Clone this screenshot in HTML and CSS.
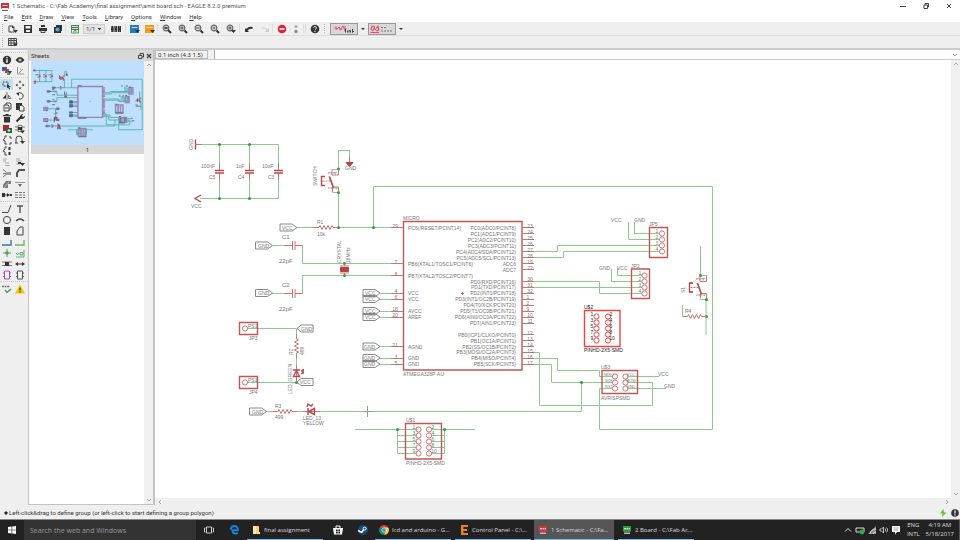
FILE: index.html
```
<!DOCTYPE html>
<html lang="en">
<head>
<meta charset="utf-8">
<title>1 Schematic - EAGLE</title>
<link rel="stylesheet" href="styles.css">
</head>
<body>
<header class="titlebar">
  <svg class="app-icon" viewBox="0 0 8 9"><path fill="#c8323c" d="M0 1h8v5l-1 1H1L0 6z"/><path fill="#eee" d="M1 6h6v2H1z"/><path stroke="#fff" stroke-width=".8" d="M1.500 3.500h5"/><path stroke="#666" d="M1 8.500h6"/></svg>
  <h1 class="title">1 Schematic - C:\Fab Academy\final assignment\amit board.sch - EAGLE 8.2.0 premium</h1>
  <div class="window-buttons">
    <button aria-label="Minimize"><svg viewBox="0 0 8 8"><path class="ln" d="M1 4.500h6"/></svg></button>
    <button aria-label="Restore"><svg viewBox="0 0 8 8"><path class="ln" d="M2 3h3.500v3.500H2zM3 3V1.500h3.500V5H5.500"/></svg></button>
    <button aria-label="Close"><svg viewBox="0 0 8 8"><path class="ln" d="M2 2l4 4M6 2L2 6"/></svg></button>
  </div>
</header>
<nav class="menubar">
  <a href="#"><u>F</u>ile</a><a href="#"><u>E</u>dit</a><a href="#"><u>D</u>raw</a><a href="#"><u>V</u>iew</a><a href="#"><u>T</u>ools</a><a href="#"><u>L</u>ibrary</a><a href="#"><u>O</u>ptions</a><a href="#"><u>W</u>indow</a><a href="#"><u>H</u>elp</a>
</nav>
<div class="toolbar">
  <i class="handle"></i>
  <button aria-label="New"><svg viewBox="0 0 10 10"><path class="ln" d="M6 8H1V2h3l2 2v2"/><path class="fl" d="M4 1l3 3H4zM5 6h5L7.500 9z"/></svg></button>
  <button aria-label="Save"><svg viewBox="0 0 10 10"><path class="fl" fill-rule="evenodd" d="M1 1h8v8H1zM2.500 2v2.500h5V2zM3 6v2h4V6z"/></svg></button>
  <button aria-label="Print"><svg viewBox="0 0 10 10"><path class="fl" d="M3 1h4v2H3zM1 4h8v3H1z"/><path class="ln" fill="#fff" d="M3 6h4v2.500H3z"/></svg></button>
  <button aria-label="CAM processor"><svg viewBox="0 0 10 10"><path class="fl" d="M3 1h6v6H8v2H1V3h2z"/><circle cx="4.500" cy="5.500" r="2" fill="#49a9e0"/></svg></button>
  <i class="sep"></i>
  <button aria-label="Board"><svg viewBox="0 0 10 10"><path fill="#4f7d55" d="M1 1h8v5H1z"/><path stroke="#cde3ce" d="M2 2.500h6M2 4.500h6"/><path fill="none" stroke="#58a65c" d="M1.500 6v3h7V6M4 8.500V6.500h2v2"/></svg></button>
  <label class="sheet-select"><select aria-label="Sheet"><option>1/1</option></select></label>
  <button class="wide" aria-label="Library"><svg viewBox="0 0 10 10"><path class="fl" d="M0 2h10v6H0z"/><path stroke="#aaa" d="M3 2v6M6.500 2v6"/><path stroke="#ddd" stroke-dasharray="1 1" stroke-width=".6" d="M0 3h10M0 7h10"/></svg></button>
  <i class="sep"></i>
  <button aria-label="Run SCR"><svg viewBox="0 0 10 10"><path fill="#2779c4" d="M0 1h9v8H0z"/><path stroke="#cfe4f5" d="M1.500 3.500h6"/><path class="fl" d="M5 6h5L7.500 9z"/></svg></button>
  <button aria-label="Run ULP"><svg viewBox="0 0 10 10"><path fill="#f29a1f" d="M0 1h9v8H0z"/><path stroke="#ffe6be" d="M1.500 3.500h6"/><path class="fl" d="M5 6h5L7.500 9z"/></svg></button>
  <i class="sep"></i>
  <button class="zoom" aria-label="Zoom to fit"><svg viewBox="0 0 10 10"><circle class="lens" cx="4" cy="4" r="2.800"/><path class="hd" d="M6 6l3 3"/><path class="ln" stroke-width="2" d="M2.500 4h3"/></svg></button>
  <button class="zoom" aria-label="Zoom in"><svg viewBox="0 0 10 10"><circle class="lens" cx="4" cy="4" r="2.800"/><path class="hd" d="M6.500 6.500L9 9"/><path class="ln" d="M2.500 4h3M4 2.500v3"/></svg></button>
  <button class="zoom" aria-label="Zoom out"><svg viewBox="0 0 10 10"><circle class="lens" cx="4" cy="4" r="2.800"/><path class="hd" d="M6.500 6.500L9 9"/><path class="ln" d="M2.500 4h3"/></svg></button>
  <button class="zoom" aria-label="Redraw"><svg viewBox="0 0 10 10"><circle class="lens" cx="4" cy="4" r="2.800"/><circle fill="#777" cx="4" cy="4" r="1.200"/><path class="hd" d="M6.500 6.500L9 9"/></svg></button>
  <button class="zoom" aria-label="Zoom select"><svg viewBox="0 0 10 10"><circle class="lens" cx="4" cy="4" r="2.800"/><path class="ln" d="M2.500 4h3M4 2.500v3"/><path class="fl" d="M4.500 6H10L7.500 9z"/></svg></button>
  <i class="sep"></i>
  <button class="zoom" aria-label="Undo"><svg viewBox="0 0 10 10"><path class="hd" fill="none" d="M2.500 6.500C4 4 6 3.500 8.500 4"/><path class="fl" d="M1 4v4h4z"/></svg></button>
  <button aria-label="Redo" disabled><svg viewBox="0 0 10 10"><path stroke="#ccc" fill="none" d="M1.500 4C4 3.500 6 4 7.500 6.500"/><path fill="#ccc" d="M9 4v4H5z"/></svg></button>
  <i class="sep"></i>
  <button aria-label="Stop"><svg viewBox="0 0 10 10"><circle cx="5" cy="5" r="4.300" fill="#e0203e"/><path stroke="#fff" stroke-width="1.600" d="M2.500 5h5"/></svg></button>
  <button class="slim" aria-label="Go"><svg viewBox="0 0 10 10"><circle cx="5" cy="2.500" r="1.500" fill="#aaa"/><circle cx="5" cy="7.500" r="1.700" fill="#888"/></svg></button>
  <i class="sep"></i><i class="sep"></i>
  <button aria-label="Help"><svg viewBox="0 0 10 10"><circle class="fl" cx="5" cy="5" r="4.300"/><path stroke="#fff" fill="none" d="M3.500 4c0-2 3-2 3 0C6.500 5 5 5 5 6.200M5 7v1"/></svg></button>
  <i class="handle spaced"></i>
  <button class="brand" aria-label="DesignLink"><svg viewBox="0 0 26 10"><path stroke="#e64a68" fill="none" d="M3 4.500q1-2 2 0t2-.5 2 .5 2-1 2 1 2-.500M5 2.500v3M9 4v2.500M14 2v3"/><path stroke="#444" fill="none" d="M14.500 5v3.500M16.500 6.500v2M18 8.500v-2h1.500v2M21.500 5v3.500l1.500-1.500"/></svg></button>
  <i class="drop"></i>
  <button class="brand" aria-label="PCB quote"><svg viewBox="0 0 26 10"><path stroke="#e64a68" stroke-width="1.200" fill="none" d="M2 6c0-6 5-4 3-1L3 7M6 6l3-4 1 4-3 1M1.500 8.500h8.500"/><path stroke="#777" stroke-width="1.200" stroke-dasharray="2 1" d="M12 3.500h6M12 7h11"/></svg></button>
  <i class="drop"></i>
</div>
<div class="toolbar second">
  <i class="handle"></i>
  <button aria-label="Grid"><svg viewBox="0 0 10 10"><path class="ln" d="M.5 1.500h8v7h-8zM.5 3.500h8M.5 6h8M3 1v8M6 1v8"/><path class="fl" d="M5 6.500h5L7.500 9z"/></svg></button>
</div>
<main class="workspace">
  <aside class="tools">
    <div class="tool-group">
      <button aria-label="Info"><svg viewBox="0 0 10 10"><circle class="fl" cx="5" cy="5" r="4.200"/><path stroke="#fff" stroke-width="1.400" d="M5 2v1.300M5 4.200v3.600"/></svg></button>
      <button aria-label="Show"><svg viewBox="0 0 10 10"><path class="fl" d="M.5 5Q5-1 9.500 5 5 11 .5 5z"/><circle cx="5" cy="5" r="1.600" fill="#bbb"/></svg></button>
      <button aria-label="Layers"><svg viewBox="0 0 10 10"><path fill="#2a66b8" d="M0 1h5v4H0z"/><path fill="#d5304a" d="M3 3h4v4H3z"/><path fill="#45a36a" d="M5 6h3v3H5z"/><path class="fl" d="M6 5h4L8 8z"/></svg></button>
      <button aria-label="Mark"><svg viewBox="0 0 10 10"><path stroke="#999" fill="none" d="M2.500 1v7H9M4 7l4-4M5 3h1"/></svg></button>
    </div>
    <div class="tool-group">
      <button class="active" aria-label="Group"><svg viewBox="0 0 10 10"><path class="ln" stroke-dasharray="1 .5" d="M1 2h5v4H1z"/><path class="fl" d="M5 4l4 3-2 .3L8 9l-1 .5-.8-2L5 8z"/></svg></button>
      <button aria-label="Move"><svg viewBox="0 0 10 10"><path class="fl" d="M5 .5l1.500 2h-3zM5 9.500l1.500-2h-3zM.5 5l2-1.500v3zM9.500 5l-2-1.500v3z"/></svg></button>
      <button aria-label="Mirror"><svg viewBox="0 0 10 10"><path class="fl" d="M4 3.500v4H.5z"/><path stroke="#777" fill="none" d="M6.500 4v3.500h2.500zM5 1v8"/></svg></button>
      <button aria-label="Rotate"><svg viewBox="0 0 10 10"><path class="ln" d="M2.500 3a3.200 3.200 0 1 1 1.500 5"/><path class="fl" d="M1 2l3-.5V5z"/></svg></button>
      <button aria-label="Copy"><svg viewBox="0 0 10 10"><path class="ln" d="M2 3h4l1 1v5H2zM4 3V1h4l1 1v5H7M3 6h3"/></svg></button>
      <button aria-label="Paste"><svg viewBox="0 0 10 10"><path class="fl" d="M1 1h6v2H4v5H1z"/><path class="ln" d="M4.500 3.500h3l1.500 2V9H4.500z"/></svg></button>
      <button aria-label="Delete"><svg viewBox="0 0 10 10"><path class="fl" d="M1 2h2.500V1h3v1H9v1.300H1zM2 4h6v5.500H2z"/></svg></button>
      <button aria-label="Change"><svg viewBox="0 0 10 10"><path class="hd" d="M1.500 8.500L6 4"/><path class="fl" d="M5 3l2-2h1L7 3l1 1 2-1v1L8 6H5z"/></svg></button>
      <button aria-label="Add"><svg viewBox="0 0 10 10"><path fill="#b8202e" d="M1 1h6v6H1z"/><path fill="#27653a" d="M4 4h6v5H4z"/><path stroke="#fff" stroke-width=".8" d="M7 5v3M5.500 6.500h3"/></svg></button>
      <button aria-label="Pin swap"><svg viewBox="0 0 10 10"><path stroke="#777" fill="none" d="M0 3h3M0 6h3M3 1.500h4v6H3zM7 3h3"/><path class="fl" d="M3 3h4v3H3zM5 6.500h5L7.500 9.500z"/></svg></button>
      <button aria-label="Replace"><svg viewBox="0 0 10 10"><path class="ln" d="M5 1H3v2L1 5l2 1v3h2M7 9h2V7M7 2h2v2"/></svg></button>
      <button aria-label="Gate swap"><svg viewBox="0 0 10 10"><path class="ln" d="M1 8V4a3 3 0 0 1 6 0v3M0 8h3"/><path class="fl" d="M5 6h5L7.500 9z"/></svg></button>
      <button aria-label="Swap"><svg viewBox="0 0 10 10"><path class="ln" d="M5 1H3v2L1 5l2 1v3h2"/><path class="hd" d="M7.500 9V6M7.500 1v3"/></svg></button>
      <span></span>
      <button aria-label="Name"><svg viewBox="0 0 10 10"><path stroke="#aaa" d="M1 2h4M1 4h3M3 6h4M3 8.500h5"/></svg></button>
      <button aria-label="Value"><svg viewBox="0 0 10 10"><path stroke="#aaa" d="M1 2h4M1 4h6M1 7h4"/><path class="fl" d="M5 6h5L7.500 9zM3 5h3v2H3z"/></svg></button>
      <button aria-label="Smash"><svg viewBox="0 0 10 10"><path stroke="#777" fill="none" d="M1 1.500l3 2.500M1 9l3-2.500M1 5.500h3"/><path fill="#999" d="M4 4h5v3H4z"/></svg></button>
      <button aria-label="Miter"><svg viewBox="0 0 10 10"><path stroke="#555" stroke-width="2" fill="none" d="M2 9V5l2-3h6"/></svg></button>
      <button aria-label="Split"><svg viewBox="0 0 10 10"><path fill="#777" d="M1 9V6l3-4h5v3H6v4z"/><path stroke="#ddd" stroke-width=".7" d="M2 9l5-6"/></svg></button>
      <button aria-label="Invoke"><svg viewBox="0 0 10 10"><path stroke="#999" fill="none" d="M0 3.500h10"/><path fill="#666" d="M3 5h4L5 8z"/></svg></button>
      <button aria-label="Net break"><svg viewBox="0 0 10 10"><path class="fl" d="M0 3h3v1.500h2V3l3 2-3 2V5.500H3V7H0zM8 4h2v2H8z"/></svg></button>
      <button aria-label="Array"><svg viewBox="0 0 10 10"><path stroke="#777" stroke-dasharray="3 1" d="M0 2.500h10M0 5h10M0 7.500h10"/></svg></button>
    </div>
    <div class="tool-group">
      <button aria-label="Wire"><svg viewBox="0 0 10 10"><path class="ln" d="M0 8.500h6L9 1"/></svg></button>
      <button aria-label="Text"><svg viewBox="0 0 10 10"><path stroke="#555" stroke-width="1.400" d="M2 2h6M5 2v7"/></svg></button>
      <button aria-label="Circle"><svg viewBox="0 0 10 10"><circle class="ln" cx="5" cy="5" r="3.600"/></svg></button>
      <button aria-label="Arc"><svg viewBox="0 0 10 10"><path class="ln" stroke-width="1.400" d="M1 6q4-4 8 0"/></svg></button>
      <button aria-label="Rectangle"><svg viewBox="0 0 10 10"><path class="fl" d="M2 1h6v8H2z"/></svg></button>
      <button aria-label="Polygon"><svg viewBox="0 0 10 10"><path class="ln" d="M2 9V5l3-4h3v8z"/></svg></button>
      <button aria-label="Bus"><svg viewBox="0 0 10 10"><path stroke="#3478bb" stroke-width="1.400" fill="none" d="M0 8h9V3"/></svg></button>
      <button aria-label="Net"><svg viewBox="0 0 10 10"><path stroke="#67b96b" stroke-width="1.300" fill="none" d="M0 8h9V3"/></svg></button>
      <button aria-label="Junction"><svg viewBox="0 0 10 10"><path stroke="#4aa651" d="M5 1v8M1 5h8"/><circle cx="5" cy="5" r="1.700" fill="#4aa651"/></svg></button>
      <button aria-label="Label"><svg viewBox="0 0 10 10"><path stroke="#66b56b" fill="none" d="M1 5l1.500 2L4 5M5 4.500h3V7H5zM1 9h8V2"/></svg></button>
      <button aria-label="Module"><svg viewBox="0 0 10 10"><path stroke="#777" fill="none" d="M0 3h10M0 6.500h10"/><path class="fl" d="M3 3h4v4H3z"/></svg></button>
      <button aria-label="Dimension"><svg viewBox="0 0 10 10"><path class="fl" d="M0 5l3-2v1.500h4V3l3 2-3 2V5.500H3V7z"/></svg></button>
      <button aria-label="Port"><svg viewBox="0 0 10 10"><path stroke="#a257ad" fill="none" d="M2.500 1h5v8h-5zM1 3h2M7 3h2M1 6.500h2M7 6.500h2"/></svg></button>
      <button aria-label="Part"><svg viewBox="0 0 10 10"><path stroke="#555" fill="none" d="M2.500 1h5v8h-5zM1 3h2M7 3h2M1 6.500h2M7 6.500h2"/></svg></button>
    </div>
    <div class="tool-group">
      <button aria-label="ERC"><svg viewBox="0 0 10 10"><path stroke="#777" stroke-dasharray="2 .6" stroke-width="1.500" d="M0 2.500h8"/><path stroke="#4aa651" stroke-width="1.500" fill="none" d="M3 6l2 2.500L9 5"/></svg></button>
      <button aria-label="Errors"><svg viewBox="0 0 10 10"><path fill="#f5c400" d="M5 .5l5 9H0z"/><path stroke="#333" stroke-width="1.200" d="M5 3.500v3M5 7.300v1.200"/></svg></button>
    </div>
  </aside>
  <section class="sheets">
    <h2 class="panel-head"><span>Sheets</span>
      <button aria-label="Float"><svg viewBox="0 0 8 8"><path class="ln" d="M1.500 3.500h3.500v3H1.500zM3 3V1.500h3.500V5H5"/></svg></button>
      <button aria-label="Close panel"><svg viewBox="0 0 8 8"><path class="ln" stroke-width="1.400" d="M2 2l4 4M6 2L2 6"/></svg></button>
    </h2>
    <div class="sheet-body">
      <div class="sheet-list">
        <figure class="sheet">
          <svg class="thumb" viewBox="178 99 543 404">
            <use href="#drawing"/>
            <path class="blobs" d="M200 165h14M236 165h9M262 165h12M209 177h6M238 177h6M268 177h6M191 206h10M190 140v8M315 167v19M345 168h10M282 227h12M256 245h16M256 293h16M279 237h10M279 261h14M281 285h10M279 309h14M339 245v17M347 250v12M317 222h6M317 233h8M403 218h18M365 293h14M365 299h14M365 311h14M365 317h14M363 346h16M363 358h16M363 364h16M403 374h41M299 328h14M299 382h12M249 338h8M249 391h8M290 367v26M290 350v5M302 345v10M250 411h16M275 406h7M275 417h9M303 418h18M303 424h20M406 420h9M406 463h38M611 219h9M634 219h10M649 224h8M600 267h9M617 267h9M631 265h8M584 307h9M584 350h38M601 366h9M601 397h29M605 376h6M605 382h6M605 388h6M627 376h6M627 382h6M627 388h6M658 374h9M664 386h10M683 287v6M685 311h7"/>
          </svg>
          <figcaption>1</figcaption>
        </figure>
      </div>
      <div class="vscroll"><svg viewBox="0 0 6 6"><path d="M1 4l2-2 2 2"/></svg><svg viewBox="0 0 6 6"><path d="M1 2l2 2 2-2"/></svg></div>
    </div>
  </section>
  <section class="editor">
    <div class="command-row">
      <output class="coords">0.1 inch (4.3 1.5)</output><i class="gap-box"></i>
      <input class="command" aria-label="Command line">
      <svg class="combo" viewBox="0 0 6 6"><path d="M1 2l2 2 2-2"/></svg>
    </div>
    <div class="canvas-row">
      <svg class="canvas" viewBox="155 60 796 438" preserveAspectRatio="xMinYMin meet">
        <defs>
          <path id="res" d="M-12 0h5l1-2 2 4 2-4 2 4 2-4 2 4 2-4 1 2h5"/>
          <path id="cap" d="M0 163v7M0 173v7"/>
          <path id="plates" d="M-4.500 170.500h9M-4.500 173h9"/>
          <path id="tag" d="M-17-3.500h12l5 3.500-5 3.500h-12z"/>
          <path id="tagl" d="M16-3.500H4L0 0l4 3.500h12z"/>
          <path id="sw" d="M0-12v6h-6.500v-6M-9.500-4.500l4 11M-17-4.500h3.500M-17-4.500V4.500h3.500M-16 0h2M-13 0h2M-10 0h2M-6 11V6h6v5"/>
          <g id="pins4"><circle cy="0" r="2.600"/><circle cy="6" r="2.600"/><circle cy="12" r="2.600"/><circle cy="18" r="2.600"/></g>
          <g id="pins5"><circle cy="0" r="2.600"/><circle cy="6" r="2.600"/><circle cy="12" r="2.600"/><circle cy="18" r="2.600"/><circle cy="24" r="2.600"/></g>
        </defs>
        <g id="drawing">
          <path class="net" d="M202 144.500h76.500V163M219.500 144.500V163M249.500 144.500V163M219.500 180v18M249.500 180v18M278.500 180v18.500H200M338.500 169v-18.500h11V157M332.500 169.500h6M332.500 192.500h6V227.500M297 227.500h17M335 227.500h57M373.500 227.500v-41H712.500V429.500H599.500V388.500H612M272 245.500h12M302.500 245.500v18H392M272 293.500h12M302.500 293.500v-18H392M380 293.500h12M380 299.500h12M380 311.500h12M380 317.500h12M380 346.500h12M380 358.500h12M380 364.500h12M534 251.500h23.500v-6H660M534 257.500h29.500v-6H660M534 281.500h65.500v12H642M534 287.500H642M628.500 222v17.500H660M634.500 222v11.500H660M611.500 269v12.500H642M617.500 268v7.500H642M534 352.500h5.500v53H652.500v-23H627M534 358.500h23.500v12h42v6H613M534 364.500h17.500v18H613M581.500 382.500v29H320M627 376.500h32M627 388.500h39M700.500 246v29.500h6M700 299.500h6V335M682.500 305v11.500M247 328.500h49.500V334M247 382.500h49.500M296.500 358v7M266 411.500h8M296 411.500h7M355 429.500h62M397.500 429.500v24H417M397.500 435.500H417M397.500 441.500H417M397.500 447.500H417M475 429.500H431M444.500 429.500v24H431M444.500 435.500H431M444.500 441.500H431M444.500 447.500H431"/>
          <g class="dots"><circle cx="219.500" cy="144.500" r="1.500"/><circle cx="249.500" cy="144.500" r="1.500"/><circle cx="219.500" cy="198.500" r="1.500"/><circle cx="249.500" cy="198.500" r="1.500"/><circle cx="338.500" cy="169" r="1.500"/><circle cx="338.500" cy="192.500" r="1.500"/><circle cx="338.500" cy="227.500" r="1.500"/><circle cx="373.500" cy="227.500" r="1.500"/><circle cx="344.500" cy="263.500" r="1.500"/><circle cx="344.500" cy="275.500" r="1.500"/><circle cx="296.500" cy="382.500" r="1.500"/><circle cx="581.500" cy="382.500" r="1.500"/><circle cx="397.500" cy="429.500" r="1.500"/><circle cx="444.500" cy="429.500" r="1.500"/><circle cx="700.500" cy="275.500" r="1.500"/><circle cx="706.500" cy="299.500" r="1.500"/><circle cx="706.500" cy="316.500" r="1.500"/></g>
          <g class="part">
            <path class="thick" d="M195.500 139.500v10M201 195l-6 3.500 6 3.500"/>
            <path d="M195 144.500h7M349.500 157v5"/>
            <use href="#cap" x="219.500"/><use href="#cap" x="249.500"/><use href="#cap" x="278.500"/>
            <g class="thick"><use href="#plates" x="219.500"/><use href="#plates" x="249.500"/><use href="#plates" x="278.500"/></g>
            <path class="solid" d="M346 162.500h7l-3.500 4z"/>
            <use href="#sw" x="338.500" y="181"/><use href="#sw" x="706.500" y="287.500"/>
            <path class="thick" d="M325 176.500h-3.500v9H325M329.500 176.500l4 11M693 283h-3.500v9H693M697.500 283l4 11"/>
            <use href="#res" x="326" y="227.500"/><use href="#res" x="694.500" y="316.500"/><use href="#res" x="285" y="411.500"/>
            <use href="#res" transform="translate(296.500 346) rotate(90)"/>
            <path d="M284 245.500h8.500M295 245.500h7.500M284 293.500h8.500M295 293.500h7.500M292.500 241v9M295 241v9M292.500 289v9M295 289v9"/>
            <path d="M344.500 264v2M340 266h9M340 273h9M344.500 273v2"/><path class="solid" d="M340.500 267.500h8v4h-8z"/>
            <path class="box" d="M403.500 221.500h118.500v148.500H403.500zM649.500 227.500h18v30h-18zM631.500 269h18v29.500h-18zM602 370.500h35.500v23H602zM239.500 322.500h18v12h-18zM239.500 376.500h18v12h-18zM405.500 423.500h36v35.500h-36z"/>
            <path d="M391 227.500h12M391 263.500h12M391 275.500h12M391 293.500h12M391 299.500h12M391 311.500h12M391 317.500h12M391 346.500h12M391 358.500h12M391 364.500h12M522 227.500h12M522 233.500h12M522 239.500h12M522 245.500h12M522 251.500h12M522 257.500h12M522 263.500h12M522 269.500h12M522 281.500h12M522 287.500h12M522 293.500h12M522 299.500h12M522 305.500h12M522 311.500h12M522 317.500h12M522 323.500h12M522 334.500h12M522 340.500h12M522 346.500h12M522 352.500h12M522 358.500h12M522 364.500h12M461 293.500h3M462.500 292v3"/>
            <use href="#pins4" x="662" y="233.500"/><use href="#pins4" x="644.500" y="275.500"/>
            <use href="#pins5" x="418.500" y="429.500"/><use href="#pins5" x="429" y="429.500"/>
            <circle cx="615" cy="376.500" r="2.600"/><circle cx="615" cy="382.500" r="2.600"/><circle cx="615" cy="388.500" r="2.600"/><circle cx="625.500" cy="376.500" r="2.600"/><circle cx="625.500" cy="382.500" r="2.600"/><circle cx="625.500" cy="388.500" r="2.600"/>
            <circle cx="245" cy="328.500" r="2.600"/><circle cx="245" cy="382.500" r="2.600"/>
            <path d="M296.500 365v17M303 411.500h17"/><path class="thick" d="M293.500 376.500h6l-3-6zM293 370h7M314.500 408.500v6l-6-3zM308 408v7M301 371l3-1M301 374l3-2M303 369v5M307 407l1-3 3 2 2-2"/>
          </g>
          <g class="part picked">
            <path class="box" d="M584.500 310.500h35.500v36h-35.500z"/>
            <use href="#pins5" x="596.500" y="316.500"/><use href="#pins5" x="608" y="316.500"/>
          </g>
          <g class="tags">
            <use href="#tag" x="297" y="227.500"/><use href="#tag" x="272.500" y="245.500"/><use href="#tag" x="272.500" y="293"/><use href="#tag" x="266.500" y="411.500"/>
            <use href="#tag" x="380" y="293"/><use href="#tag" x="380" y="299"/><use href="#tag" x="380" y="311"/><use href="#tag" x="380" y="317"/><use href="#tag" x="380" y="346.500"/><use href="#tag" x="380" y="358"/><use href="#tag" x="380" y="364"/>
            <use href="#tagl" x="297" y="328.500"/><use href="#tagl" x="297" y="382"/>
          </g>
        </g>
        <path class="cursor" d="M362 411.500h11M367.500 406v11"/>
        <g class="labels">
          <text x="201" y="166">100nF</text><text x="236" y="166">1uF</text><text x="262" y="166">10uF</text><text x="209" y="177">C5</text><text x="238" y="177">C4</text><text x="268" y="177">C3</text>
          <text x="191" y="206">VCC</text><text x="345" y="168">GND</text>
          <text transform="translate(191 150) rotate(-90)">GND</text><text transform="translate(315 186) rotate(-90)">SWITCH</text>
          <text x="282" y="228">VCC</text><text x="317" y="222">R1</text><text x="317" y="234">10k</text>
          <text class="big" x="282" y="237">C1</text><text class="big" x="282" y="285">C2</text><text class="big" x="279" y="261">22pF</text><text class="big" x="279" y="309">22pF</text>
          <text x="258" y="246">GND</text><text x="258" y="293">GND</text>
          <text transform="translate(339 263) rotate(-90)">CRYSTAL</text><text transform="translate(348 263) rotate(-90)">16MHz</text>
          <text x="365" y="293">VCC</text><text x="365" y="299">VCC</text><text x="365" y="311">VCC</text><text x="365" y="317">VCC</text><text x="364" y="347">GND</text><text x="364" y="358">GND</text><text x="364" y="364">GND</text>
          <text x="301" y="329">GND</text><text x="300" y="382">VCC</text><text x="252" y="412">GND</text>
          <text x="249" y="338">JP3</text><text x="249" y="392">JP4</text><text x="248" y="326">PS1</text><text x="248" y="380">PS1</text>
          <text transform="translate(291 355) rotate(-90)">R2</text><text transform="translate(302 355) rotate(-90)">499</text><text transform="translate(290 394) rotate(-90)">LED_GREEN</text>
          <text x="275" y="406">R3</text><text x="275" y="417">499</text><text x="303" y="418">LED_13</text><text x="303" y="423">YELLOW</text>
          <text x="406" y="420">U$1</text><text x="406" y="463">PINHD-2X5-SMD</text>
          <text x="403" y="218">MICRO</text><text x="403" y="374">ATMEGA328P-AU</text>
          <text x="408" y="228">PC6(/RESET/PCINT14)</text><text x="408" y="264">PB6(XTAL1/TOSC1/PCINT6)</text><text x="408" y="276">PB7(XTAL2/TOSC2/PCINT7)</text><text x="408" y="293">VCC</text><text x="408" y="299">VCC</text><text x="408" y="311">AVCC</text><text x="408" y="317">AREF</text><text x="408" y="347">AGND</text><text x="408" y="358">GND</text><text x="408" y="364">GND</text>
          <g class="end">
            <text x="516" y="228">PC0(ADC0/PCINT8)</text><text x="516" y="234">PC1(ADC1/PCINT9)</text><text x="516" y="240">PC2(ADC2/PCINT10)</text><text x="516" y="246">PC3(ADC3/PCINT11)</text><text x="516" y="252">PC4(ADC4/SDA/PCINT12)</text><text x="516" y="258">PC5(ADC5/SCL/PCINT13)</text><text x="516" y="264">ADC6</text><text x="516" y="270">ADC7</text>
            <text x="516" y="282">PD0(RXD/PCINT16)</text><text x="516" y="287">PD1(TXD/PCINT17)</text><text x="516" y="293">PD2(INT0/PCINT18)</text><text x="516" y="299">PD3(INT1/OC2B/PCINT19)</text><text x="516" y="305">PD4(T0/XCK/PCINT20)</text><text x="516" y="311">PD5(T1/OC0B/PCINT21)</text><text x="516" y="317">PD6(AIN0/OC0A/PCINT22)</text><text x="516" y="323">PD7(AIN1/PCINT23)</text>
            <text x="516" y="335">PB0(ICP1/CLKO/PCINT0)</text><text x="516" y="341">PB1(OC1A/PCINT1)</text><text x="516" y="347">PB2(SS/OC1B/PCINT2)</text><text x="516" y="352">PB3(MOSI/OC2A/PCINT3)</text><text x="516" y="358">PB4(MISO/PCINT4)</text><text x="516" y="364">PB5(SCK/PCINT5)</text>
          </g>
          <g class="nums">
            <text x="395" y="226">29</text><text x="396" y="262">7</text><text x="396" y="274">8</text><text x="396" y="291">4</text><text x="396" y="297">6</text><text x="395" y="309">18</text><text x="395" y="315">20</text><text x="395" y="345">21</text><text x="396" y="357">3</text><text x="396" y="363">5</text>
            <text x="530" y="226">23</text><text x="530" y="232">24</text><text x="530" y="238">25</text><text x="530" y="244">26</text><text x="530" y="250">27</text><text x="530" y="256">28</text><text x="530" y="262">19</text><text x="530" y="268">22</text><text x="530" y="279">30</text><text x="530" y="285">31</text><text x="530" y="291">32</text><text x="528" y="297">1</text><text x="528" y="303">2</text><text x="528" y="309">9</text><text x="530" y="315">10</text><text x="530" y="321">11</text><text x="530" y="333">12</text><text x="530" y="339">13</text><text x="530" y="345">14</text><text x="530" y="351">15</text><text x="530" y="357">16</text><text x="530" y="363">17</text>
            <text x="414" y="427">1</text><text x="414" y="433">3</text><text x="414" y="439">5</text><text x="414" y="445">7</text><text x="414" y="451">9</text><text x="433" y="427">2</text><text x="433" y="433">4</text><text x="433" y="439">6</text><text x="433" y="445">8</text><text x="434" y="451">10</text>
            <text x="657" y="231">1</text><text x="657" y="237">2</text><text x="657" y="243">3</text><text x="657" y="249">4</text><text x="640" y="273">1</text><text x="640" y="279">2</text><text x="640" y="285">3</text><text x="640" y="291">4</text>
            <text transform="translate(330 173) rotate(-90)">3</text><text transform="translate(335 173) rotate(-90)">4</text><text transform="translate(330 188) rotate(-90)">1</text><text transform="translate(335 188) rotate(-90)">2</text>
            <text transform="translate(698 279) rotate(-90)">3</text><text transform="translate(703 279) rotate(-90)">4</text><text transform="translate(698 295) rotate(-90)">1</text><text transform="translate(703 295) rotate(-90)">2</text>
          </g>
          <text x="611" y="220">VCC</text><text x="634" y="220">GND</text><text x="649" y="224">JP5</text><text x="599" y="268">GND</text><text x="617" y="268">VCC</text><text x="631" y="266">JP2</text>
          <text x="601" y="367">U$3</text><text x="601" y="398">AVRISPSMD</text><text x="658" y="374">VCC</text><text x="664" y="386">GND</text><text x="685" y="311">R4</text><text transform="translate(683 293) rotate(-90)">S1</text>
          <g class="small"><text x="609" y="374">MISO</text><text x="609" y="380">SCK</text><text x="609" y="386">RST</text><text x="631" y="374">VCC</text><text x="631" y="380">MOSI</text><text x="631" y="386">GND</text></g>
          <g class="dark">
            <text x="584" y="307">U$2</text><text x="584" y="350">PINHD-2X5-SMD</text>
            <g class="nums"><text x="592" y="314">1</text><text x="592" y="320">3</text><text x="592" y="326">5</text><text x="592" y="332">7</text><text x="592" y="338">9</text><text x="611" y="314">2</text><text x="611" y="320">4</text><text x="611" y="326">6</text><text x="611" y="332">8</text><text x="612" y="338">10</text></g>
          </g>
        </g>
      </svg>
      <div class="vscroll"><svg viewBox="0 0 6 6"><path d="M1 4l2-2 2 2"/></svg><svg viewBox="0 0 6 6"><path d="M1 2l2 2 2-2"/></svg></div>
    </div>
    <div class="hscroll"><svg viewBox="0 0 6 6"><path d="M4 1L2 3l2 2"/></svg><svg viewBox="0 0 6 6"><path d="M2 1l2 2-2 2"/></svg></div>
  </section>
</main>
<footer class="status">
  <svg viewBox="0 0 4 6"><path fill="#222" d="M2 1l2 2-2 2-2-2z"/></svg>
  <span>Left-click&amp;drag to define group (or left-click to start defining a group polygon)</span>
  <svg class="bolt" viewBox="0 0 8 8"><path fill="#6abf2c" d="M4.500 0L1 4.500h2.500L3 8l4.500-4.500H5z"/></svg>
  <svg class="alert" viewBox="0 0 8 8"><circle cx="4" cy="4" r="3.800" fill="#333"/><path stroke="#fff" stroke-width="1.200" d="M4 1.500v3M4 5.300v1.200"/></svg>
</footer>
<div class="taskbar">
  <button class="start" aria-label="Start"><svg viewBox="0 0 8 8"><path fill="#fff" d="M0 1l3.600-.5v3.300H0zM4.200.4L8 0v3.800H4.200zM0 4.300h3.600v3.200L0 7zM4.200 4.300H8V8l-3.800-.5z"/></svg></button>
  <input class="search" aria-label="Search" placeholder="Search the web and Windows">
  <button class="pin" aria-label="Task view"><svg viewBox="0 0 10 10"><path fill="none" stroke="#ddd" stroke-width=".9" d="M2.500 2h5v6h-5zM1.500 3H.5v4h1M8.500 3h1v4h-1"/></svg></button>
  <button class="pin" aria-label="Edge"><svg viewBox="0 0 10 10"><path fill="none" stroke="#1683d8" stroke-width="2" d="M1.500 4.500C2 2 4 1 5.500 1 8 1 9 3 8.800 5.200H3.500C3.500 9 7 9 8.800 7.800"/></svg></button>
  <button class="task folder"><svg viewBox="0 0 10 10"><path fill="#f3d37a" d="M2 1h6v8H2z"/><path fill="#fbe9ad" d="M2 1h3v8H2zM7 7h2v2H7z"/></svg><span>final assignment</span></button>
  <button class="pin store" aria-label="Store"><svg viewBox="0 0 10 10"><path fill="#fff" d="M0 3h10l-1 6.500H1z"/><path fill="none" stroke="#fff" d="M3 3V1h4v2"/><path fill="#222" d="M3 4.500h1.700v1.700H3zM5.300 4.500H7v1.700H5.300zM3 6.700h1.700v1.700H3zM5.300 6.700H7v1.700H5.300z"/></svg></button>
  <button class="pin" aria-label="Steam"><svg viewBox="0 0 10 10"><circle cx="5" cy="5" r="5" fill="#164a7c"/><circle cx="6.700" cy="3.600" r="1.500" fill="none" stroke="#fff"/><path stroke="#fff" stroke-width="1.800" d="M0 5.500l3.500 1.700L5.500 5"/></svg></button>
  <button class="task"><svg viewBox="0 0 10 10"><path fill="#db4437" d="M.7 2.500a5 5 0 0 1 8.600 0L5 5z"/><path fill="#0f9d58" d="M.7 2.500A5 5 0 0 0 5 10l1-4z"/><path fill="#ffcd40" d="M9.300 2.500A5 5 0 0 1 5 10l2-5-2-2.500z"/><circle cx="5" cy="5" r="2.200" fill="#4285f4" stroke="#fff" stroke-width=".6"/></svg><span>lcd and arduino - G...</span></button>
  <button class="task"><svg viewBox="0 0 10 10"><path fill="#e0862a" d="M2 0h7v2H4.500v2H8v2H4.500v2H9v2H2z"/></svg><span>Control Panel - C:\...</span></button>
  <button class="task current"><svg viewBox="0 0 10 10"><path fill="#d33442" d="M1 1h8v5L8 7H2L1 6z"/><path fill="#bbb" d="M2 7.500h6V9H2z"/><path stroke="#fff" stroke-dasharray="2 .5" d="M2 3.800h6"/></svg><span>1 Schematic - C:\Fa...</span></button>
  <button class="task"><svg viewBox="0 0 10 10"><path fill="#2f9a3e" d="M1 1h8v5L8 7H2L1 6z"/><path fill="#bbb" d="M2 7.500h6V9H2z"/><path stroke="#fff" stroke-dasharray="2 .5" d="M2 3.800h6"/></svg><span>2 Board - C:\Fab Ac...</span></button>
  <div class="tray">
    <svg viewBox="0 0 10 10"><path fill="none" stroke="#ddd" d="M2 6.500l3-3 3 3"/></svg>
    <svg viewBox="0 0 10 10"><path fill="none" stroke="#ddd" d="M1 3h8v4H1z"/><circle cx="7" cy="7" r="2.400" fill="#2fae47"/></svg>
    <svg viewBox="0 0 10 10"><path fill="#888" d="M9 1v8H1z"/><path stroke="#ddd" fill="none" d="M3 9A6 6 0 0 1 9 4M6 9a3 3 0 0 1 3-2"/></svg>
    <svg viewBox="0 0 10 10"><path fill="none" stroke="#ddd" stroke-width=".8" d="M1 4h1.500L4.500 2v6l-2-2H1zM6 3.500q1.500 1.500 0 3M7.500 2.500q2.500 2.500 0 5"/></svg>
    <svg viewBox="0 0 10 10"><path fill="#fff" d="M1 1h8v6H6L4 9.500V7H1z"/><path stroke="#777" stroke-width=".7" d="M2.500 3h5M2.500 5h5"/></svg>
    <div class="lang">ENG<br>INTL</div>
    <div class="clock">4:19 AM<br>5/18/2017</div>
  </div>
</div>
</body>
</html>
```
FILE: styles.css
```
* { box-sizing: border-box; }
body {
  margin: 0;
  height: 100vh;
  display: flex;
  flex-direction: column;
  overflow: hidden;
  background: #efefef;
  color: #333;
  font: 6px/8px Roboto, "Open Sans", sans-serif;
}
button {
  display: flex;
  align-items: center;
  justify-content: center;
  padding: 0;
  border: 0;
  background: none;
  color: inherit;
  font: inherit;
}
button svg { width: 10px; height: 10px; }
h1, h2, figure { margin: 0; font: inherit; }
a { color: inherit; text-decoration: none; }
.ln { fill: none; stroke: #444; }
.fl { fill: #333; }
.hd { fill: none; stroke: #333; stroke-width: 2; }
.lens { fill: #ddd; stroke: #666; stroke-width: 1.2; }

.titlebar { display: flex; align-items: center; height: 12px; padding-left: 1px; background: #fff; }
.app-icon { width: 8px; height: 9px; margin-right: 3px; }
.title { flex: 1; color: #555; }
.window-buttons { display: flex; }
.window-buttons button { width: 23px; }
.window-buttons svg { width: 8px; height: 8px; }
.menubar { display: flex; gap: 8px; height: 10px; padding-left: 4px; line-height: 10px; background: #fff; }
.menubar u { text-decoration-thickness: 1px; text-underline-offset: 1px; }

.toolbar { display: flex; align-items: center; height: 14px; padding-left: 2px; border-bottom: 1px solid #ddd; }
.toolbar button { width: 15px; }
.toolbar .zoom { width: 16px; }
.toolbar .slim { width: 14px; }
.toolbar .wide { width: 19px; }
.toolbar.second { height: 14px; border-bottom: 2px solid #ccc; }
.handle { width: 3px; height: 9px; border-left: 1px dotted #bbb; }
.handle.spaced { margin: 0 3px 0 2px; }
.sep { width: 2px; height: 9px; border-left: 1px solid #ddd; }
.sheet-select select {
  width: 22px;
  height: 10px;
  margin: 0 1px;
  padding: 0 2px;
  border: 1px solid #ccc;
  appearance: none;
  background: linear-gradient(to bottom right, #333 50%, transparent 50%) 16px 3px / 2px 2px no-repeat,
    linear-gradient(to bottom left, #333 50%, transparent 50%) 14px 3px / 2px 2px no-repeat, #e4e4e4;
  color: #444;
  font: inherit;
}
.toolbar .brand { width: 28px; height: 12px; border: 1px solid #999; background: #d8d8d8; }
.brand svg { width: 26px; height: 10px; }
.drop { margin: 0 3px; border: 2px solid transparent; border-top-color: #333; border-bottom: 0; }

.workspace { flex: 1; min-height: 0; display: flex; }
.tools { width: 28px; padding-top: 2px; }
.tool-group {
  display: grid;
  grid-template-columns: 13px 14px;
  grid-auto-rows: 11px;
  padding-top: 1px;
  border-top: 1px dotted #ccc;
}
.tool-group + .tool-group { margin-top: 1px; }
.tool-group .active { background: #c4def2; }
.sheets {
  width: 127px;
  display: flex;
  flex-direction: column;
  border: 1px solid #c4c4c4;
  border-width: 0 2px 1px 1px;
  margin-bottom: 1px;
}
.panel-head { display: flex; align-items: center; height: 11px; padding-left: 2px; background: #d8d8d8; }
.panel-head span { flex: 1; }
.panel-head button svg { width: 8px; height: 8px; }
.sheet-body { flex: 1; display: flex; background: #fff; }
.sheet-list { flex: 1; padding-left: 2px; }
.thumb { display: block; width: 100%; background: #bfdfff; --net: #5cb8ac; --part: #9585ae; --box: #9585ae; --picked: #9585ae; --tag: #6d7ea0; }
.thumb *, #drawing *, defs * { vector-effect: non-scaling-stroke; }
.blobs { fill: none; stroke: #3a4d78; stroke-width: 1px; opacity: .75; }
.sheet figcaption { height: 9px; background: #d6d6d6; text-align: center; line-height: 9px; }
.vscroll { display: flex; flex-direction: column; justify-content: space-between; align-items: center; width: 9px; background: #f0f0f0; padding: 1px 0; }
.vscroll svg, .hscroll svg, .combo { width: 6px; height: 6px; fill: none; stroke: #aaa; }

.editor { flex: 1; min-width: 0; display: flex; flex-direction: column; }
.command-row { display: flex; align-items: center; height: 10px; border-bottom: 1px solid #ccc; background: #fff; }
.coords { width: 53px; height: 9px; padding-left: 2px; background: #f0f0f0; border: 1px solid #bbb; line-height: 8px; }
.gap-box { width: 7px; height: 9px; border-right: 1px solid #aaa; background: #f0f0f0; }
.command { flex: 1; min-width: 0; height: 9px; padding: 0 2px; border: 0; font: inherit; }
.combo { margin-right: 2px; }
.canvas-row { flex: 1; min-height: 0; display: flex; background: #fff; }
.canvas { flex: 1; min-width: 0; height: 100%; --net: #8dcb8d; --part: #cc7474; --box: #c05656; --picked: #ee4444; --tag: #888; }
.hscroll { display: flex; justify-content: space-between; align-items: center; height: 8px; padding: 0 10px 0 2px; }

.net { fill: none; stroke: var(--net); }
.dots { fill: #2f9b3b; }
.part { fill: none; stroke: var(--part); }
.part .thick { stroke: #b84848; stroke-width: 1.4px; }
.part .box { stroke: var(--box); stroke-width: 1.4px; }
.part .solid { fill: #b04444; stroke: #b04444; }
.picked, .part.picked .box { stroke: var(--picked); }
.tags { fill: none; stroke: var(--tag); }
.cursor { stroke: #999; }
.labels { fill: #777; font: 5px "Liberation Sans", sans-serif; dominant-baseline: central; }
.labels .big { font-size: 6px; }
.labels .end { text-anchor: end; }
.labels .nums { text-anchor: middle; font-size: 5px; }
.labels .small { text-anchor: middle; font-size: 4px; }
.labels .dark { fill: #222; }

.status { display: flex; align-items: center; gap: 1px; height: 13px; padding: 0 1px 0 4px; }
.status span { flex: 1; }
.status svg { width: 4px; height: 6px; }
.status .bolt, .status .alert { width: 8px; height: 8px; margin-left: 3px; }

.taskbar { display: flex; align-items: stretch; height: 21px; border-top: 1px solid #888; background: #222; color: #ddd; font-family: "Open Sans", sans-serif; }
.start { width: 24px; }
.start svg { width: 8px; height: 8px; }
.search { width: 172px; padding: 0 6px; border: 0; background: #333; color: #ddd; font: 7px "Open Sans", sans-serif; }
.search::placeholder { color: #999; opacity: 1; }
.pin { width: 25px; }
.task { width: 76px; justify-content: flex-start; gap: 3px; margin-right: 4px; padding-left: 4px; border-bottom: 1px solid #76b9ed; white-space: nowrap; }
.task svg { flex: none; }
.task span { overflow: hidden; }
.task.folder { margin-left: 1px; }
.task.current { width: 80px; margin-left: -1px; background: #555; }
.store { margin-left: -2px; }
.tray { display: flex; align-items: center; gap: 2px; margin-left: auto; padding-right: 5px; border-right: 1px solid #555; line-height: 9px; text-align: center; }
.tray svg { width: 10px; height: 10px; }
.lang { margin: 0 4px; }
```
